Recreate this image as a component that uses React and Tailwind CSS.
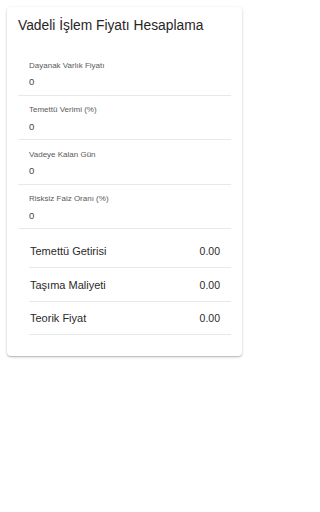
const FIELDS = [
  "Dayanak Varlık Fiyatı",
  "Temettü Verimi (%)",
  "Vadeye Kalan Gün",
  "Risksiz Faiz Oranı (%)",
];

const RESULTS = [
  ["Temettü Getirisi", "0.00"],
  ["Taşıma Maliyeti", "0.00"],
  ["Teorik Fiyat", "0.00"],
];

export default function App() {
  return (
    <div className="min-h-[512px] bg-white p-[7px] font-['Liberation_Sans',Arial,sans-serif]">
      <div className="w-[235px] rounded-[4px] bg-white px-[11px] pt-[9px] pb-[21px] shadow-[0_1px_3px_rgba(0,0,0,0.2),0_1px_1px_rgba(0,0,0,0.14)]">
        <h1 className="text-[13.8px] leading-[20px] text-[#262626]">
          Vadeli İşlem Fiyatı Hesaplama
        </h1>

        {/* inputs */}
        <div className="mt-[15px]">
          {FIELDS.map((label) => (
            <div
              key={label}
              className="h-[44.5px] border-b border-[#e8e8e8] pl-[11px] pt-[9.5px]"
            >
              <p className="text-[8px] leading-[10px] text-[#5a5a5a]">{label}</p>
              <p className="mt-[5.5px] text-[9.5px] leading-[12px] text-[#444]">
                0
              </p>
            </div>
          ))}
        </div>

        {/* results */}
        <div className="mt-[5.5px] pl-[11px]">
          {RESULTS.map(([label, value]) => (
            <div
              key={label}
              className="flex h-[33.5px] items-center justify-between border-b border-[#e8e8e8] pl-[1px] pr-[11px] pt-[1px] text-[11px] leading-[16px] text-[#2a2a2a]"
            >
              <span>{label}</span>
              <span className="text-[10.5px]">{value}</span>
            </div>
          ))}
        </div>
      </div>
    </div>
  );
}
